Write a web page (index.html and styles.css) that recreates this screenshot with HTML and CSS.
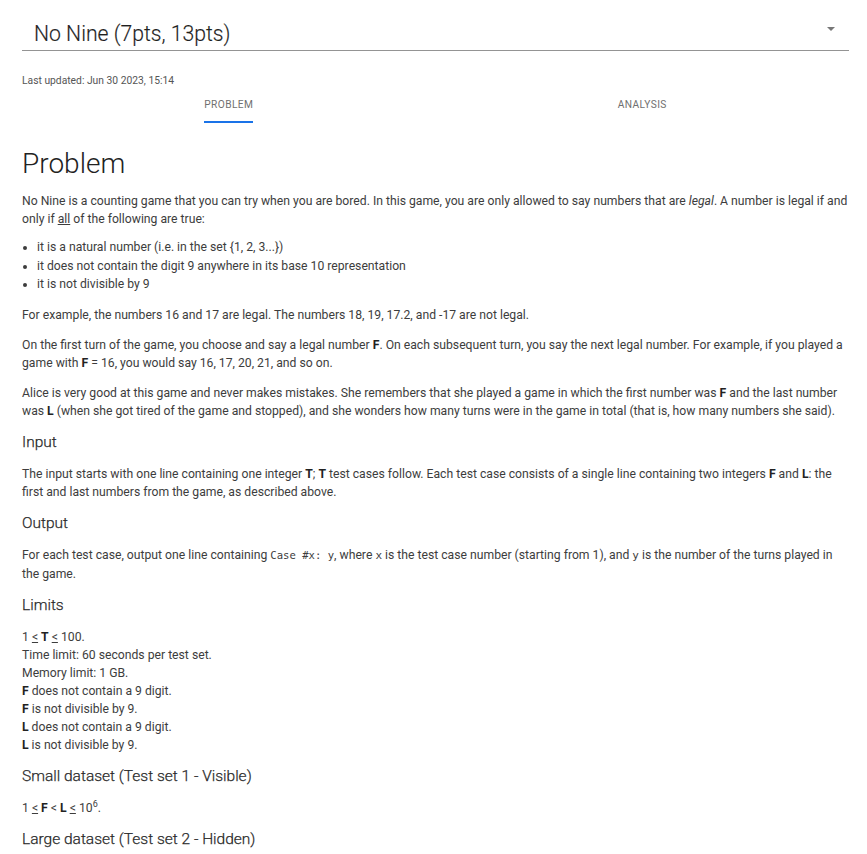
FILE: index.html
```html
<!DOCTYPE html>
<html>
<head>
<meta charset="utf-8">
<link rel="stylesheet" href="styles.css">
</head>
<body>
<div class="page">
  <div class="select">
    <span class="select-text">No Nine (7pts, 13pts)</span>
    <span class="select-arrow"></span>
  </div>
  <div class="updated">Last updated: Jun 30 2023, 15:14</div>
  <div class="tabs">
    <div class="tab active"><span class="tab-label">PROBLEM</span></div>
    <div class="tab"><span class="tab-label">ANALYSIS</span></div>
  </div>
  <h1 class="title">Problem</h1>
  <p>No Nine is a counting game that you can try when you are bored. In this game, you are only allowed to say numbers that are <em>legal</em>. A number is legal if and only if <u>all</u> of the following are true:</p>
  <ul>
    <li>it is a natural number (i.e. in the set {1, 2, 3...})</li>
    <li>it does not contain the digit 9 anywhere in its base 10 representation</li>
    <li>it is not divisible by 9</li>
  </ul>
  <p>For example, the numbers 16 and 17 are legal. The numbers 18, 19, 17.2, and -17 are not legal.</p>
  <p>On the first turn of the game, you choose and say a legal number <b>F</b>. On each subsequent turn, you say the next legal number. For example, if you played a game with <b>F</b> = 16, you would say 16, 17, 20, 21, and so on.</p>
  <p>Alice is very good at this game and never makes mistakes. She remembers that she played a game in which the first number was <b>F</b> and the last number was <b>L</b> (when she got tired of the game and stopped), and she wonders how many turns were in the game in total (that is, how many numbers she said).</p>
  <h3>Input</h3>
  <p>The input starts with one line containing one integer <b>T</b>; <b>T</b> test cases follow. Each test case consists of a single line containing two integers <b>F</b> and <b>L</b>: the first and last numbers from the game, as described above.</p>
  <h3>Output</h3>
  <p>For each test case, output one line containing <code>Case #x: y</code>, where <code class="var">x</code> is the test case number (starting from 1), and <code class="var">y</code> is the number of the turns played in the game.</p>
  <h3>Limits</h3>
  <p>1 <u>&lt;</u> <b>T</b> <u>&lt;</u> 100.<br>Time limit: 60 seconds per test set.<br>Memory limit: 1 GB.<br><b>F</b> does not contain a 9 digit.<br><b>F</b> is not divisible by 9.<br><b>L</b> does not contain a 9 digit.<br><b>L</b> is not divisible by 9.</p>
  <h3>Small dataset (Test set 1 - Visible)</h3>
  <p>1 <u>&lt;</u> <b>F</b> &lt; <b>L</b> <u>&lt;</u> 10<sup>6</sup>.</p>
  <h3>Large dataset (Test set 2 - Hidden)</h3>
</div>
</body>
</html>
```
FILE: styles.css
```css
html, body {
  margin: 0;
  padding: 0;
  background: #fff;
}
body {
  font-family: Roboto, "Liberation Sans", sans-serif;
  color: #3d3d3d;
  font-size: 12.2px;
  line-height: 18px;
}
.page {
  padding: 12px 18px 0 22px;
}
.select {
  display: flex;
  align-items: flex-end;
  justify-content: space-between;
  height: 38px;
  border-bottom: 1px solid #949494;
  padding-left: 12px;
  padding-right: 14px;
}
.select-text {
  font-size: 21.2px;
  font-weight: 300;
  color: #1f1f1f;
  line-height: 24px;
  padding-bottom: 4px;
  -webkit-text-stroke: 0.15px #1f1f1f;
}
.select-arrow {
  width: 0;
  height: 0;
  border-left: 4px solid transparent;
  border-right: 4px solid transparent;
  border-top: 4px solid #777;
  align-self: center;
  margin-top: -4px;
}
.updated {
  margin-top: 23px;
  font-size: 10.3px;
  line-height: 14px;
  color: #555;
}
.tabs {
  display: flex;
  margin-top: 4px;
}
.tab {
  flex: 1;
  display: flex;
  justify-content: center;
}
.tab-label {
  font-size: 10.2px;
  color: #707070;
  line-height: 14px;
  padding: 6px 0 9px;
  letter-spacing: 0.4px;
}
.tab.active .tab-label {
  border-bottom: 2px solid #1a73e8;
}
.title {
  margin: 24px 0 11px;
  font-size: 28px;
  font-weight: 300;
  line-height: 34px;
  color: #222;
}
p {
  margin: 0 0 12px;
}
ul {
  margin: -2px 0 12px;
  padding-left: 15px;
}
li {
  line-height: 18.5px;
}
em {
  font-style: italic;
}
b {
  font-weight: 700;
  color: #222;
}
code {
  font-family: "DejaVu Sans Mono", "Liberation Mono", monospace;
  font-size: 10.6px;
}
code.var {
  font-size: 11px;
}
sup {
  font-size: 9px;
  line-height: 0;
}
h3 {
  margin: 0 0 13px;
  font-size: 15.5px;
  font-weight: 300;
  line-height: 20px;
  color: #2a2a2a;
  -webkit-text-stroke: 0.25px #2a2a2a;
}
```
